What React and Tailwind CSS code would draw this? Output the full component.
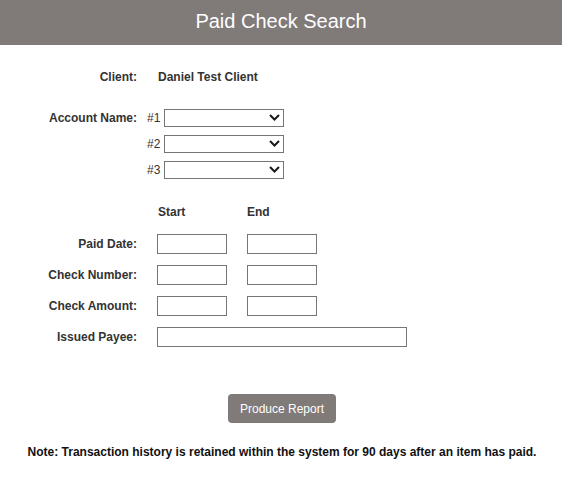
const Chevron = () => (
  <svg
    className="pointer-events-none absolute right-[4px] top-[5px]"
    width="11"
    height="7"
    viewBox="0 0 11 7"
    fill="none"
  >
    <path d="M1 1l4.5 4.5L10 1" stroke="#1a1a1a" strokeWidth="2" />
  </svg>
);

const AccountSelect = ({ num, label }) => (
  <div className="flex items-center h-[18px]">
    <div className="w-[137px] text-right font-bold">{label}</div>
    <span className="ml-[10px] w-[17px] text-[#333]">#{num}</span>
    <div className="relative">
      <select className="appearance-none block w-[120px] h-[18px] border border-[#767676] bg-white rounded-none outline-none">
        <option value=""></option>
      </select>
      <Chevron />
    </div>
  </div>
);

const RangeRow = ({ label }) => (
  <div className="flex items-center h-[20px]">
    <div className="w-[137px] text-right font-bold">{label}</div>
    <input
      type="text"
      className="ml-[20px] w-[70px] h-[20px] border border-[#767676] bg-white outline-none"
    />
    <input
      type="text"
      className="ml-[20px] w-[70px] h-[20px] border border-[#767676] bg-white outline-none"
    />
  </div>
);

export default function App() {
  return (
    <div
      className="w-[562px] h-[477px] bg-white text-[12px] leading-[14px] text-[#333]"
      style={{ fontFamily: '"Liberation Sans", Arial, sans-serif' }}
    >
      <div className="h-[45px] bg-[#807a79] flex items-center justify-center text-white text-[20px] pb-[3px]">
        Paid Check Search
      </div>

      {/* client */}
      <div className="flex items-center h-[14px] mt-[25px]">
        <div className="w-[137px] text-right font-bold">Client:</div>
        <div className="ml-[21px] font-bold">Daniel Test Client</div>
      </div>

      {/* account names */}
      <div className="mt-[25px] flex flex-col gap-[8px]">
        <AccountSelect num={1} label="Account Name:" />
        <AccountSelect num={2} label="" />
        <AccountSelect num={3} label="" />
      </div>

      {/* start / end */}
      <div className="flex items-center h-[14px] mt-[26px] font-bold">
        <div className="w-[137px]"></div>
        <div className="ml-[21px] w-[89px]">Start</div>
        <div>End</div>
      </div>

      <div className="mt-[15px] flex flex-col gap-[11px]">
        <RangeRow label="Paid Date:" />
        <RangeRow label="Check Number:" />
        <RangeRow label="Check Amount:" />
        <div className="flex items-center h-[20px]">
          <div className="w-[137px] text-right font-bold">Issued Payee:</div>
          <input
            type="text"
            className="ml-[20px] w-[250px] h-[20px] border border-[#767676] bg-white outline-none"
          />
        </div>
      </div>

      <div className="flex justify-center mt-[47px] pl-[2px]">
        <button className="w-[108px] h-[29px] rounded-[4px] bg-[#807a79] text-white text-[12px]">
          Produce Report
        </button>
      </div>

      <p className="mt-[22px] text-center font-bold text-[#111] pl-[2px]">
        Note: Transaction history is retained within the system for 90 days after an item has paid.
      </p>
    </div>
  );
}
